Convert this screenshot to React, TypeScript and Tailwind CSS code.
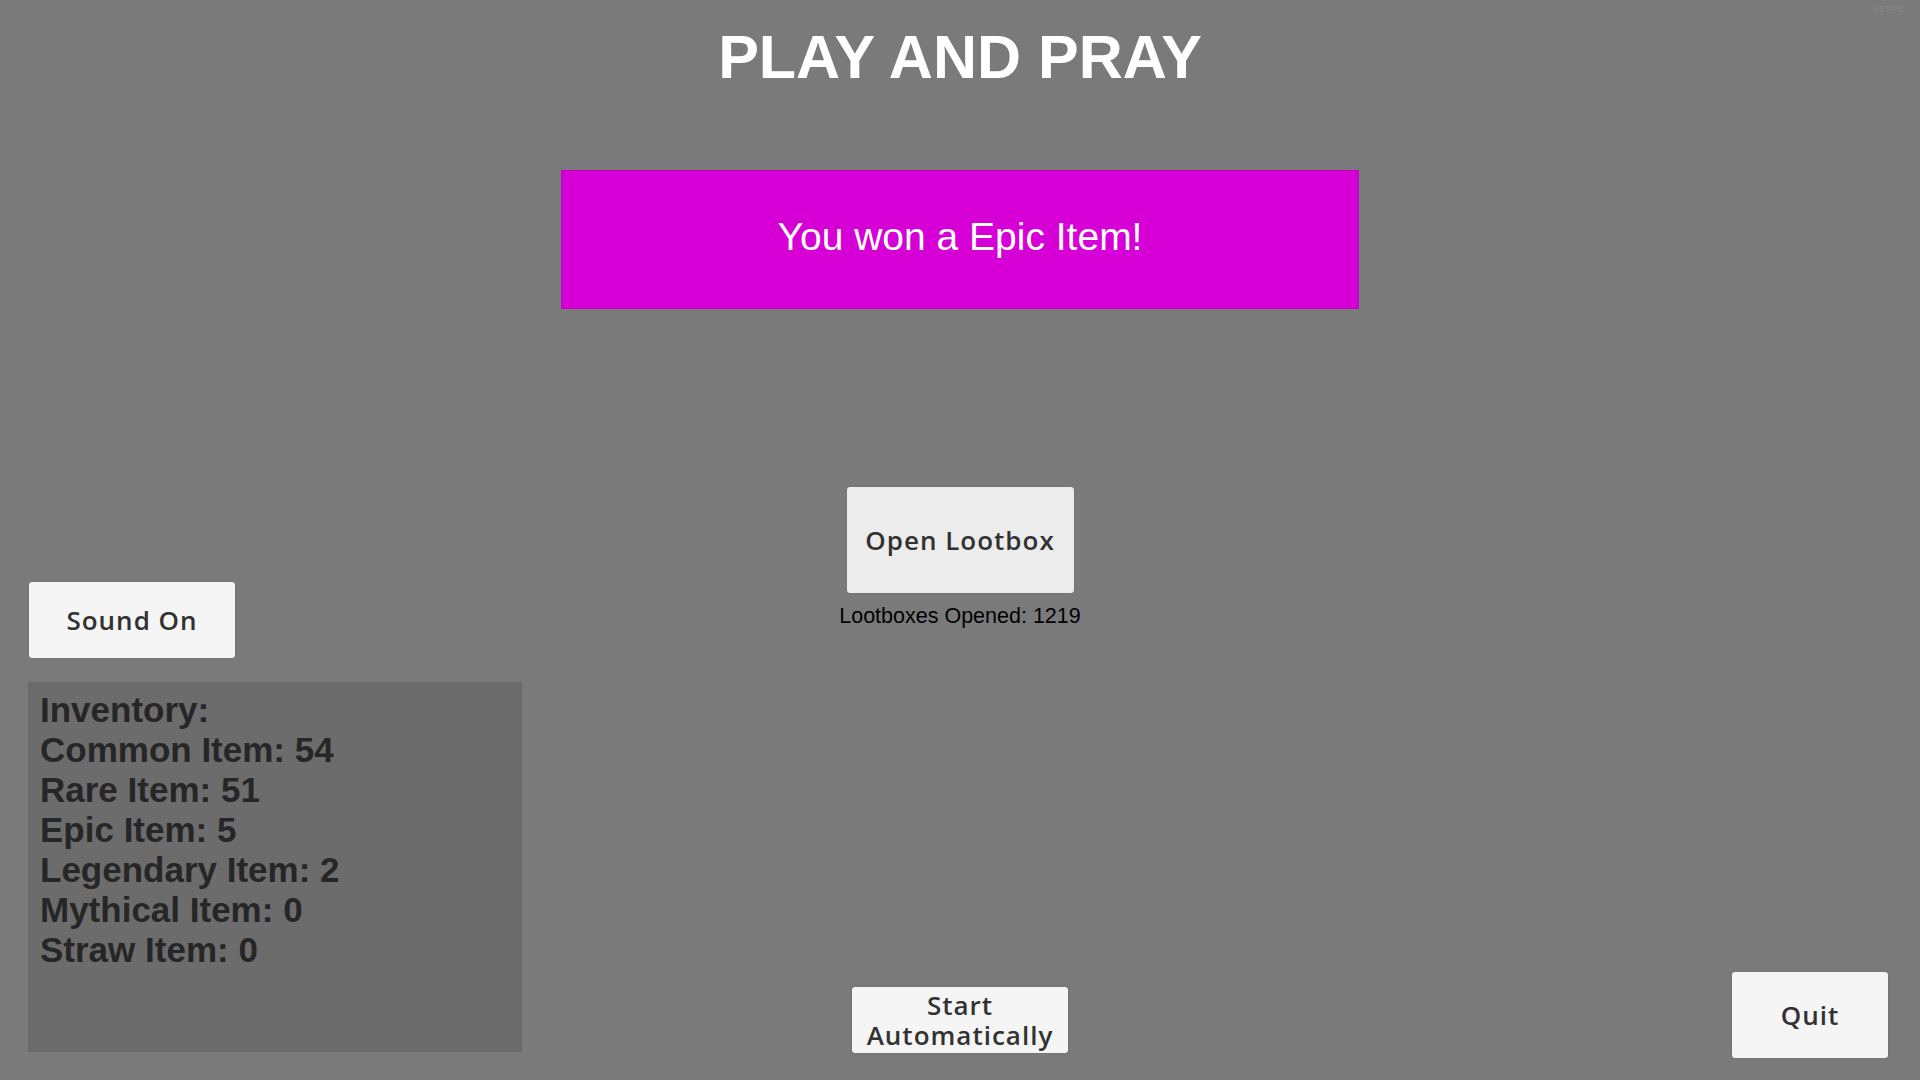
import React from "react";

const inventory = [
  { name: "Common Item", count: 54 },
  { name: "Rare Item", count: 51 },
  { name: "Epic Item", count: 5 },
  { name: "Legendary Item", count: 2 },
  { name: "Mythical Item", count: 0 },
  { name: "Straw Item", count: 0 },
];

const btn =
  "flex items-center justify-center rounded-[3px] text-[#323232] font-semibold text-[26px] tracking-[1px] [font-family:'Open_Sans',sans-serif] shadow-[0_0_1px_rgba(0,0,0,0.35)]";

export default function App() {
  return (
    <div className="relative w-full h-[1080px] overflow-hidden bg-[#7a7a7a] [font-family:'Liberation_Sans',Arial,sans-serif]">
      {/* fps counter */}
      <div className="absolute top-[3px] right-[16px] text-[9px] leading-[12px] text-[#8a8a8a]">
        93 FPS
      </div>

      <div className="grid h-full grid-cols-[561px_1fr_561px]">
        {/* Left: sound + inventory */}
        <div className="flex flex-col justify-end pl-[28px] pb-[28px]">
          <button className={`${btn} ml-[1px] w-[206px] h-[76px] bg-[#f5f5f5]`}>
            Sound On
          </button>
          <div className="mt-[24px] w-[494px] h-[370px] bg-[#6c6c6c] border border-[#686868] pl-[11px] pt-[7px] text-[#262626] font-bold text-[35px] leading-[40px]">
            <div>Inventory:</div>
            {inventory.map((item) => (
              <div key={item.name}>
                {item.name}: {item.count}
              </div>
            ))}
          </div>
        </div>

        {/* Center column */}
        <div className="flex flex-col items-center pt-[27px] pb-[27px]">
          <h1 className="text-white font-bold text-[61px] leading-[61px]">PLAY AND PRAY</h1>
          <div className="mt-[82px] w-[798px] h-[139px] pb-[4px] bg-[#d600d6] border border-[#c400c4] flex items-center justify-center text-white text-[39px]">
            You won a Epic Item!
          </div>
          <button className={`${btn} mt-[178px] w-[227px] h-[106px] bg-[#ececec]`}>
            Open Lootbox
          </button>
          <div className="mt-[11px] text-black text-[21.5px] leading-[24px]">Lootboxes Opened: 1219</div>
          <button
            className={`${btn} mt-auto w-[216px] h-[66px] bg-[#f5f5f5] flex-col gap-[1px] text-[24px] tracking-[0.8px] leading-[29px]`}
          >
            <span className="block h-[29px]">Start</span>
            <span className="block h-[29px]">Automatically</span>
          </button>
        </div>

        {/* Right: quit */}
        <div className="flex items-end justify-end pr-[32px] pb-[22px]">
          <button className={`${btn} w-[156px] h-[86px] bg-[#f5f5f5]`}>Quit</button>
        </div>
      </div>
    </div>
  );
}
